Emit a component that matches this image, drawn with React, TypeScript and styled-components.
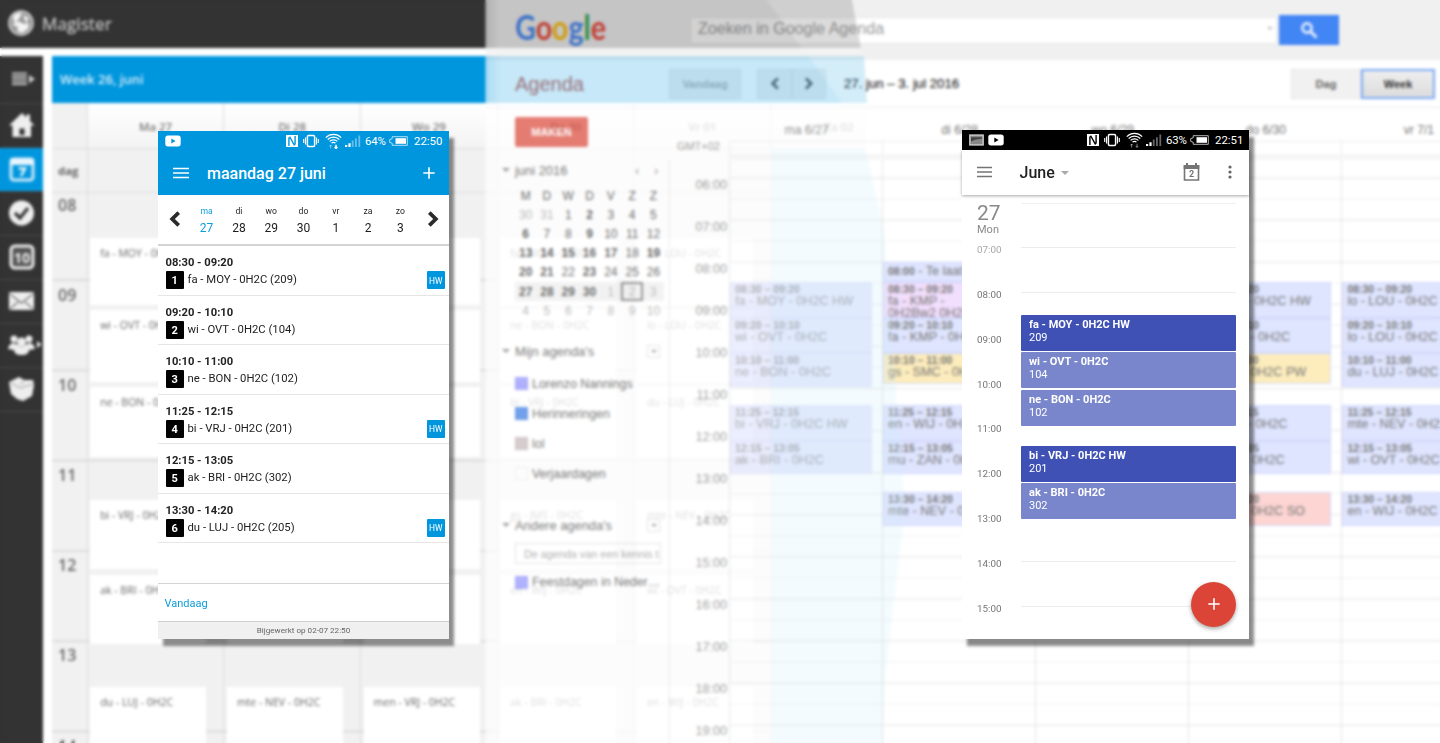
import React from "react";
import styled, { createGlobalStyle, css } from "styled-components";

const GlobalStyle = createGlobalStyle`
  * { box-sizing: border-box; }
  body { margin: 0; background: #fff; overflow: hidden; }
`;

const Stage = styled.div`
  position: relative;
  width: 1440px;
  height: 743px;
  overflow: hidden;
  background: #fff;
  font-family: Roboto, sans-serif;
`;

const Frost = styled.div`
  position: absolute;
  inset: 0;
  backdrop-filter: blur(1.8px);
`;

/* ---------- Google Agenda (desktop) ---------- */

const Google = styled.div`
  position: absolute;
  inset: 0;
  padding-left: 485px;
  display: flex;
  flex-direction: column;
  font-family: "Liberation Sans", Arial, sans-serif;
  color: #444;
`;

const GTop = styled.header`
  height: 60px;
  flex: none;
  display: flex;
  align-items: center;
  background: #f0f0f0;
  padding-left: 30px;
`;

const GLogo = styled.svg`
  width: 94px;
  height: 44px;
  margin-right: 81px;
  font: 700 33.5px Lato, sans-serif;
`;

const GSearch = styled.div`
  width: 587px;
  height: 27px;
  border: 1px solid #e6e6e6;
  background: #fff;
  display: flex;
  align-items: center;
  justify-content: space-between;
  padding: 0 3px 3px 7px;
  font-size: 16.1px;
  color: #999;
  margin-right: 2px;
`;

const GSearchButton = styled.div`
  width: 60px;
  height: 30px;
  display: grid;
  place-items: center;
  background: #4285f4;
`;

const Caret = styled.i<{ $c?: string; $s?: number }>`
  border: ${(p) => p.$s || 4}px solid transparent;
  border-top-color: ${(p) => p.$c || "#888"};
  border-bottom: 0;
`;

const GBar = styled.div`
  height: 48px;
  flex: none;
  display: flex;
  align-items: center;
  padding-left: 30px;
  border-bottom: 1px solid #ebebeb;
`;

const GName = styled.div`
  width: 154px;
  padding-top: 2px;
  font-size: 20px;
  color: #c9675c;
`;

const GButton = styled.div<{ $w: number; $on?: boolean; $mr?: number; $off?: boolean }>`
  width: ${(p) => p.$w}px;
  height: 30px;
  margin-right: ${(p) => p.$mr || 0}px;
  display: grid;
  place-items: center;
  font-size: 11px;
  font-weight: 700;
  color: ${(p) => (p.$on ? "#333" : p.$off ? "#b5b5b5" : "#666")};
  background: ${(p) => (p.$on ? "linear-gradient(#eee, #dcdcdc)" : "#f1f1f1")};
  border: ${(p) => (p.$on ? "2px solid #7aa9f5" : "1px solid #e6e6e6")};
`;

const GRange = styled.div`
  flex: 1;
  font-size: 13.2px;
  color: #222;
  -webkit-text-stroke: 0.15px #222;
`;

const GBody = styled.div`
  flex: 1;
  display: flex;
  min-height: 0;
`;

const GSide = styled.aside`
  width: 184px;
  flex: none;
  padding: 9px 7px 0 30px;
  display: flex;
  flex-direction: column;
`;

const GCreate = styled.div`
  width: 73px;
  height: 30px;
  display: grid;
  place-items: center;
  border-radius: 2px;
  background: #df5a4c;
  color: #fff;
  font-weight: 700;
  font-size: 11px;
`;

const GHeading = styled.div<{ $mt: number; $wide?: boolean }>`
  height: 20px;
  margin: ${(p) => p.$mt}px ${(p) => (p.$wide ? -6 : 2)}px 0 -13px;
  display: flex;
  align-items: center;
  gap: 5px;
  font-size: 12.9px;
  color: #555;
  span { flex: 1; }
`;

const Small = styled.i`
  font-style: normal;
  width: 14px;
  color: #888;
  font-size: 13px;
`;

const MiniMenu = styled.div`
  width: 13px;
  height: 13px;
  display: grid;
  place-items: center;
  border: 1px solid #ddd;
`;

const MiniCal = styled.div`
  margin-top: 6px;
  width: 149px;
  display: grid;
  grid-template-columns: repeat(7, 21.3px);
  grid-auto-rows: 19.2px;
`;

const MiniDay = styled.div<{ $dim?: boolean; $bold?: boolean; $hl?: boolean; $box?: boolean }>`
  display: grid;
  place-items: center;
  font-size: 12px;
  color: ${(p) => (p.$dim ? "#aaa" : "#444")};
  font-weight: ${(p) => (p.$bold ? 700 : 400)};
  background: ${(p) => (p.$hl ? "#efefef" : "none")};
  ${(p) => p.$box && css`border: 2px solid #777;`}
`;

const GCal = styled.div`
  height: 30px;
  display: flex;
  align-items: center;
  gap: 4px;
  font-size: 12.4px;
  white-space: nowrap;
  color: #555;
`;

const GCals = styled.div<{ $mt: number }>`
  margin-top: ${(p) => p.$mt}px;
`;

const Swatch = styled.i<{ $c: string }>`
  width: 13px;
  height: 13px;
  flex: none;
  background: ${(p) => p.$c};
  border: 1px solid #0001;
`;

const GInput = styled.div`
  height: 21px;
  width: 146px;
  margin: 8px 0 3px;
  padding: 4px 0 0 8px;
  border: 1px solid #ddd;
  font-size: 10.8px;
  color: #999;
  white-space: nowrap;
  overflow: hidden;
`;

const GGutter = styled.div`
  width: 60px;
  flex: none;
  padding: 32px 2px 0 0;
  display: flex;
  flex-direction: column;
  text-align: right;
  font-size: 12.6px;
  color: #888;
  background: linear-gradient(#e4e4e4, #e4e4e4) 0 52px / 1px 600px no-repeat;
`;

const GZone = styled.div`
  height: 12px;
  margin-bottom: 24.5px;
  padding-right: 7px;
  font-size: 11px;
  line-height: 12px;
`;

const GHour = styled.div`
  height: 42.05px;
  flex: none;
  line-height: 16px;
`;

const GWeek = styled.div`
  flex: 1;
  display: grid;
  grid-template-columns: repeat(5, 153.1px);
  min-width: 0;
  overflow: hidden;
`;

const GDay = styled.div`
  display: flex;
  flex-direction: column;
`;

const GDayName = styled.div`
  height: 33px;
  padding: 15px 0 0 2px;
  text-align: center;
  font-size: 12.2px;
  line-height: 14px;
  color: #777;
`;

const GAllDay = styled.div`
  height: 19px;
  border: solid #ebebeb;
  border-width: 1px 0 0 1px;
  border-bottom: 6px solid #f6f6f6;
`;

const GHours = styled.div`
  flex: 1;
  border-left: 1px solid #e2e2e2;
  background:
    linear-gradient(#e2e2e2, #e2e2e2 1px, transparent 1px) 0 17.5px / 100% 42.1px,
    linear-gradient(#f1f1f1, #f1f1f1 1px, transparent 1px) 0 38.5px / 100% 42.1px;
`;

const GEvent = styled.div<{ $gap: number; $h: number; $bg?: string; $soft?: boolean }>`
  width: 142px;
  height: ${(p) => p.$h}px;
  margin-top: ${(p) => p.$gap}px;
  padding: 2px 4px 0;
  overflow: hidden;
  font-size: 12.6px;
  line-height: 12px;
  white-space: pre-line;
  color: ${(p) => (p.$soft ? "#a0a0a8" : "#777")};
  background: ${(p) => p.$bg || (p.$soft ? "#e5eafe" : "#dfe5ff")};
  border: 1px solid ${(p) => (p.$soft ? "#dde0fb" : "#d2d6fb")};
`;

const GTime = styled.b<{ $inline?: boolean }>`
  display: ${(p) => (p.$inline ? "inline" : "block")};
  font-size: 10.4px;
  line-height: 10px;
`;

/* ---------- Magister (desktop) ---------- */

const Magister = styled.div`
  position: absolute;
  inset: 0;
  background: #fff;
  font-family: "Open Sans", sans-serif;
  display: flex;
  flex-direction: column;
  clip-path: polygon(0 0, 852px 0, 861px 48px, 864px 56px, 867px 104px, 866px 150px, 884px 230px, 905px 510px, 885px 680px, 883px 743px, 0 743px);
  mask-image: linear-gradient(to right, #000 485px, rgba(0, 0, 0, 0.33) 486px, rgba(0, 0, 0, 0.225) 500px);
`;

const Sheen = styled.div`
  position: absolute;
  inset: 0 auto auto 760px;
  width: 120px;
  height: 103px;
  background: rgba(255, 255, 255, 0.22);
  clip-path: polygon(7px 0, 120px 0, 120px 103px, 82px 103px);
`;

const MTop = styled.header`
  height: 48px;
  flex: none;
  display: flex;
  align-items: center;
  gap: 8px;
  padding: 0 0 2px 8px;
  background: #333;
  color: #c4c4c4;
  font-size: 17.2px;
  -webkit-text-stroke: 0.3px #c4c4c4;
`;

const MBody = styled.div`
  flex: 1;
  min-height: 0;
  display: flex;
  gap: 9px;
  margin-top: 8px;
`;

const MNav = styled.nav`
  width: 43px;
  flex: none;
  background: #333;
`;

const MNavItem = styled.div<{ $on?: boolean; $first?: boolean }>`
  height: ${(p) => (p.$first ? 47.5 : 44.05)}px;
  display: grid;
  place-items: center;
  border-bottom: 1px solid #484848;
  background: ${(p) => (p.$on ? "#0096de" : "none")};
  color: #eee;
  svg { width: 30px; height: 30px; overflow: visible; }
`;

const MMain = styled.main`
  flex: 1;
  min-width: 0;
  display: flex;
  flex-direction: column;
`;

const MBar = styled.div`
  height: 47px;
  flex: none;
  padding: 14px 8px;
  background: #0096de;
  color: #d9effa;
  font-size: 13px;
  font-weight: 600;
  line-height: 18px;
`;

const MTable = styled.div`
  flex: 1;
  min-height: 0;
  display: grid;
  grid-template-columns: 35.7px repeat(6, 136.7px);
  overflow: hidden;
`;

const mHourLines = css`
  background: linear-gradient(#dcdcdc, #dcdcdc 1.5px, transparent 1.5px) 0 86px / 100% 90.3px, #f1f1f1;
`;

const MTimes = styled.div`
  padding-top: 45px;
  border-right: 1.5px solid #dcdcdc;
  background: #f1f1f1;
  color: #666;
  font-weight: 600;
  display: flex;
  flex-direction: column;
`;

const MDayPart = styled.div`
  height: 45px;
  flex: none;
  border: solid #dcdcdc;
  border-width: 1.5px 0;
  font-size: 11.4px;
  padding: 14px 6px;
  line-height: 15px;
  font-weight: 700;
`;

const MTimeList = styled.div`
  flex: 1;
  ${mHourLines}
  font-size: 16px;
`;

const MHour = styled.div`
  height: 90.1px;
  padding: 1px 6px;
`;

const MDay = styled.div<{ $tint?: boolean }>`
  display: flex;
  flex-direction: column;
  border-right: 1.5px solid #dcdcdc;
  ${(p) => p.$tint && css`
    background: #ccecfb;
    && > * + * { background: none; border-bottom-color: transparent; }
  `}
`;

const MDayName = styled.div`
  height: 45px;
  flex: none;
  padding-top: 16px;
  text-align: center;
  font-size: 11.4px;
  line-height: 15px;
  font-weight: 600;
  color: #777;
  background: linear-gradient(#fff, #f3f3f3);
`;

const MAllDay = styled.div`
  height: 45px;
  flex: none;
  border: solid #dcdcdc;
  border-width: 1.5px 0;
  background: #f1f1f1;
`;

const MHours = styled.div<{ $plain?: boolean }>`
  flex: 1;
  padding-left: 2.5px;
  ${(p) => !p.$plain && mHourLines}
`;

const MEvent = styled.div<{ $gap: number; $h: number }>`
  width: 116px;
  height: ${(p) => p.$h}px;
  margin-top: ${(p) => p.$gap}px;
  padding: 6.5px 10px;
  background: #fff;
  font-size: 10.5px;
  line-height: 16px;
  color: #666;
  white-space: nowrap;
`;

/* ---------- Phones ---------- */

const Phone = styled.section<{ $x: number; $y: number; $w: number }>`
  position: absolute;
  left: ${(p) => p.$x}px;
  top: ${(p) => p.$y}px;
  width: ${(p) => p.$w}px;
  height: ${(p) => 639 - p.$y}px;
  display: flex;
  flex-direction: column;
  background: #fff;
  box-shadow: 5px 7px 3px rgba(0, 0, 0, 0.45);
`;

const Status = styled.div<{ $bg: string; $pr: number }>`
  height: 20px;
  flex: none;
  display: flex;
  align-items: center;
  padding: 0 ${(p) => p.$pr}px 0 7px;
  background: ${(p) => p.$bg};
  color: #fff;
  font-size: 11.4px;
  svg { flex: none; }
`;

const StatusLeft = styled.div`
  flex: 1;
  display: flex;
  gap: 4px;
`;

const StatusIcon = styled.svg<{ $ml: number }>`
  margin-left: ${(p) => p.$ml}px;
`;

const Percent = styled.span`
  width: 24px;
  margin-left: 4px;
  letter-spacing: -0.1px;
`;

const Clock = styled.span`
  width: 28px;
  margin-left: 6px;
`;

const BlueBar = styled.div`
  height: 44px;
  flex: none;
  display: flex;
  align-items: center;
  padding: 0 14px 0 15px;
  background: #0096de;
  color: #fff;
`;

const BlueTitle = styled.h1`
  flex: 1;
  margin: 0 0 0 18px;
  font-size: 16px;
  font-weight: 500;
`;

const Strip = styled.div`
  height: 51px;
  flex: none;
  display: grid;
  grid-template-columns: 32px repeat(7, 32.3px) 32px;
  justify-content: center;
  align-items: center;
  border-bottom: 2px solid #d4d4d4;
  svg { justify-self: center; margin: -1px 0 0 1px; }
`;

const StripDay = styled.div<{ $on?: boolean }>`
  display: flex;
  flex-direction: column;
  align-items: center;
  padding-top: 2px;
  font-size: 12px;
  line-height: 17px;
  color: ${(p) => (p.$on ? "#0d9ddb" : "#1c1c1c")};
  small { font-size: 8.6px; margin-top: -1px; }
`;

const Lesson = styled.article`
  height: 49.55px;
  flex: none;
  padding: 9px 4px 0 7.5px;
  border-bottom: 1px solid #e6e6e6;
  color: #222;
`;

const LessonTime = styled.div`
  font-size: 11.2px;
  font-weight: 700;
  line-height: 15px;
`;

const LessonLine = styled.div`
  height: 18px;
  margin-top: 1px;
  display: flex;
  align-items: center;
  font-size: 11.3px;
  span { flex: 1; margin: -1px 0 0 3.5px; }
`;

const Badge = styled.b<{ $hw?: boolean }>`
  width: 18.5px;
  height: 18px;
  display: grid;
  place-items: center;
  border-radius: 1px;
  padding-top: 1px;
  background: ${(p) => (p.$hw ? "#0096de" : "#000")};
  color: #fff;
  font-size: ${(p) => (p.$hw ? 8.4 : 11)}px;
  font-weight: ${(p) => (p.$hw ? 400 : 700)};
`;

const Today = styled.div`
  margin-top: auto;
  height: 38px;
  padding: 12px 6.5px;
  border-top: 1px solid #d4d4d4;
  color: #0d9ddb;
  font-size: 11px;
  line-height: 15px;
`;

const Updated = styled.div`
  height: 18px;
  border-top: 1px solid #d0d0d0;
  background: #f0f0f0;
  color: #666;
  font-size: 8.1px;
  line-height: 17px;
  text-align: center;
`;

const WhiteBar = styled.div`
  height: 45px;
  flex: none;
  display: flex;
  align-items: center;
  padding: 0 17px 1px 15px;
  background: #fff;
  color: #757575;
  box-shadow: 0 1px 3px rgba(0, 0, 0, 0.35);
  z-index: 1;
`;

const Month = styled.h1`
  flex: 1;
  margin: 1px 0 0 27.5px;
  display: flex;
  align-items: center;
  gap: 6px;
  font-size: 16px;
  font-weight: 500;
  color: #212121;
`;

const CalendarIcon = styled.svg`
  margin-right: 28px;
`;

const Agenda = styled.div`
  position: relative;
  flex: 1;
  min-height: 0;
  padding-left: 15px;
`;

const DateBlock = styled.div`
  height: 45px;
  padding-top: 7px;
  color: #8a8a8a;
  font-size: 21px;
  line-height: 22px;
  small { display: block; font-size: 11px; line-height: 12px; }
`;

const Hour = styled.div<{ $dim?: boolean }>`
  height: 44.85px;
  display: flex;
  gap: 19px;
  padding-right: 13px;
  font-size: 9.8px;
  line-height: 19px;
  color: ${(p) => (p.$dim ? "#a8a8a8" : "#757575")};
  span { width: 25px; }
`;

const Rule = styled.i`
  flex: 1;
  height: 1px;
  margin-top: 7px;
  background: #ececec;
`;

const TopRule = styled.i`
  display: block;
  height: 1px;
  margin: 8px 13px -9px 44px;
  background: #f1f1f1;
`;

const Blocks = styled.div`
  position: absolute;
  top: 120px;
  left: 59px;
  width: 215px;
`;

const Block = styled.div<{ $hw?: boolean; $gap?: number }>`
  height: 35.8px;
  margin-bottom: ${(p) => p.$gap || 1.6}px;
  padding: 3px 8px;
  border-radius: 1px;
  background: ${(p) => (p.$hw ? "#3f51b5" : "#7986cb")};
  color: #fff;
  font-size: 11px;
  line-height: 13px;
  b { display: block; }
`;

const Fab = styled.div`
  position: absolute;
  right: 13px;
  bottom: 12.5px;
  width: 45px;
  height: 45px;
  display: grid;
  place-items: center;
  border-radius: 50%;
  background: #db4437;
  box-shadow: 0 2px 4px rgba(0, 0, 0, 0.35);
`;

/* ---------- Icons ---------- */

const Burger = ({ w = 15 }: { w?: number }) => (
  <svg width={w} height="12" fill="none" stroke="currentColor" strokeWidth="1.5">
    <path d={`M0 1.5H${w}M0 6H${w}M0 10.5H${w}`} />
  </svg>
);

const Plus = ({ s = 12 }: { s?: number }) => (
  <svg width={s} height={s} viewBox="0 0 12 12" stroke="#fff" strokeWidth="1.6">
    <path d="M6 .3V11.7M.3 6H11.7" />
  </svg>
);

const Chevron = ({ right, size = 16, w = 3.8, color = "#2a2a2a" }: { right?: boolean; size?: number; w?: number; color?: string }) => (
  <svg width={size * 0.75} height={size} viewBox="0 0 12 16" fill="none" stroke={color} strokeWidth={w}>
    <path d={right ? "M2.3 1.7 8.8 8l-6.5 6.3" : "M9.7 1.7 3.2 8l6.5 6.3"} />
  </svg>
);

const Tube = ({ hole }: { hole: string }) => (
  <svg width="16" height="12" viewBox="0 0 16 12">
    <rect x=".3" y=".6" width="15.4" height="10.8" rx="2.6" fill="#fff" />
    <path d="M6.3 3.4v5L10.6 6z" fill={hole} />
  </svg>
);

const StatusBar = ({ bg, level, time, picture, syncing }: { bg: string; level: string; time: string; picture?: boolean; syncing?: boolean }) => (
  <Status $bg={bg} $pr={picture ? 6 : 7}>
    <StatusLeft>
      {picture && (
        <svg width="15" height="12" viewBox="0 0 15 12">
          <rect x=".8" y="1" width="13.4" height="10" fill="#888" stroke="#ddd" strokeWidth="1.2" />
          <path d="M2 3.2h11v1.600L7 5.600 2 7.500z" fill="#444" />
        </svg>
      )}
      <Tube hole={bg} />
    </StatusLeft>
    <StatusIcon $ml={0} width="12" height="12" viewBox="0 0 12 12">
      <rect width="12" height="12" fill="#fff" />
      <path d="M2.900 11V3l1-.8 4.300 7.600.9-.8V1" fill="none" stroke={bg} strokeWidth="1.400" />
    </StatusIcon>
    <StatusIcon $ml={5} width="16" height="14" viewBox="0 0 16 14" fill="none" stroke="#fff">
      <rect x="4.400" y="1.600" width="7.200" height="10.800" rx="1.200" strokeWidth="1.500" />
      <path d="M2.500 3.400v7.200M13.500 3.400v7.200M.7 5v4M15.300 5v4" strokeWidth="1.100" />
    </StatusIcon>
    <StatusIcon $ml={6} width="17" height="16" viewBox="0 0 17 16" fill="none" stroke="#fff">
      <path d="M.8 4.600a10.900 10.900 0 0 1 15.400 0M2.700 6.500a8.200 8.200 0 0 1 11.600 0M4.600 8.400a5.500 5.500 0 0 1 7.800 0M6.500 10.200a2.800 2.800 0 0 1 4 0" strokeWidth="1.200" />
      <path d="M5.600 15.500v-3.400M4.400 13.300l1.200-1.300 1.200 1.300" strokeWidth=".8" opacity=".6" />
      <path d="M11 11.700v3.600M9.600 13.900l1.400 1.500 1.400-1.500" strokeWidth={syncing ? 1.5 : 0.8} opacity={syncing ? 1 : 0.6} />
    </StatusIcon>
    <StatusIcon $ml={3} width="16" height="12" viewBox="0 0 16 12" fill="#fff">
      <path d="M0 10h2.200v2H0zM3.400 8.200h2.200V12H3.400z" />
      <path d="M6.800 5.600h1.800V12H6.800zM10 3.200h1.800V12H10zM13.400.6h1.800V12h-1.800z" opacity=".4" />
    </StatusIcon>
    <Percent>{level}</Percent>
    <svg width="19" height="10" viewBox="0 0 19 10">
      <path d="M3.200.7H18.300v8.600H3.200V7.200L.7 6.400V3.600l2.500-.8z" fill="none" stroke="#fff" strokeOpacity=".7" />
      <path d="M6.500 2.200H17v5.600H6.500z" fill="#fff" />
    </svg>
    <Clock>{time}</Clock>
  </Status>
);

const NavIcons = [
  <svg viewBox="0 0 30 30" key="l"><path d="M5 9.500h15M5 13h15M5 16.500h15M5 20h15" stroke="#ccc" strokeWidth="1.800" /><path d="M22 11 28 15l-6 4.500z" fill="#ccc" /></svg>,
  <svg viewBox="0 0 30 30" key="h" fill="#eee"><path d="M15 3 2 15.500h3.500V27H24V15.500h3.500L23 11V4.500h-3.500v3zM12.500 18.500h5V25h-5z" fillRule="evenodd" /></svg>,
  <svg viewBox="0 0 30 30" key="c"><rect x="4" y="5" width="22" height="21" rx="3" fill="none" stroke="#cdeaf9" strokeWidth="3" /><path d="M3 4.500h24V11H3z" fill="#e8f6fd" /><path d="M11.500 14.500h6.500L14 22" stroke="#e8f6fd" strokeWidth="2.500" fill="none" /></svg>,
  <svg viewBox="0 0 30 30" key="k"><circle cx="14.500" cy="15" r="12.500" fill="#eee" /><path d="m8 15 5 5 8-10" stroke="#333" strokeWidth="3.200" fill="none" /></svg>,
  <svg viewBox="0 0 30 30" key="t"><rect x="4" y="4" width="22" height="22" rx="4" fill="#555" stroke="#eee" strokeWidth="3" /><text x="15" y="20.500" fontSize="14" fontWeight="700" fill="#eee" textAnchor="middle">10</text></svg>,
  <svg viewBox="0 0 30 30" key="m"><rect x="2" y="6" width="25" height="18" rx="1.500" fill="#eee" /><path d="m3 8 11.500 9L26 8M3 23l8-7M26 23l-8-7" stroke="#777" strokeWidth="1.400" fill="none" /></svg>,
  <svg viewBox="0 0 30 30" key="p" fill="#eee"><circle cx="7" cy="9" r="3.500" /><circle cx="22" cy="9" r="3.500" /><circle cx="14.500" cy="12" r="4.500" /><path d="M1 19q1-6 6-6l7.500 4 7.500-4q5 0 6 6l-6 1q0 5-7.500 5T7 20zM30 11l4.500 3.500L30 18z" /></svg>,
  <svg viewBox="0 0 30 30" key="b" fill="#eee"><path d="M2 8 12 3l5 3 9 0 1 5-2 11-9 5-6-2-6-5z" /><path d="m4 9 9 5 13-4M13 10l4-2" stroke="#999" fill="none" /></svg>,
];

/* ---------- Data ---------- */

const magisterDays = [
  { name: "Ma 27", items: ["fa - MOY - 0H2C", "wi - OVT - 0H2C", "ne - BON - 0H2C", "bi - VRJ - 0H2C", "ak - BRI - 0H2C", "du - LUJ - 0H2C"] },
  { name: "Di 28", items: ["", "", "", "", "", "mte - NEV - 0H2C"] },
  { name: "Wo 29", items: ["", "", "", "", "wi - OVT - 0H2C", "men - VRJ - 0H2C"] },
  { name: "Do 30", items: ["fa - MOY - 0H2C", "ne - BON - 0H2C", "bi - VRJ - 0H2C", "gs - JMS - 0H2C", "en - WIJ - 0H2C", "ak - BRI - 0H2C"] },
  { name: "Vr 01", items: ["lo - LOU - 0H2C", "lo - LOU - 0H2C", "du - LUJ - 0H2C", "mte - NEV - 0H2C", "wi - OVT - 0H2C", "en - WIJ - 0H2C"] },
];
const slots = [[45, 67], [5, 72], [5, 70], [43, 69], [6, 69], [43, 75]];

type GItem = [number, number, string, string, string?];
const googleDays: { name: string; soft?: boolean; items: GItem[] }[] = [
  { name: "ma 6/27", soft: true, items: [[122, 36, "08:30 – 09:20", "fa - MOY - 0H2C HW"], [0, 35, "09:20 – 10:10", "wi - OVT - 0H2C"], [0, 34, "10:10 – 11:00", "ne - BON - 0H2C"], [18, 36, "11:25 – 12:15", "bi - VRJ - 0H2C HW"], [0, 33, "12:15 – 13:05", "ak - BRI - 0H2C"]] },
  { name: "di 6/28", items: [[102, 20, "08:00", " - Te laat"], [0, 36, "08:30 – 09:20", "fa - KMP -\n0H2Bw2 0H2B", "#f2defd"], [0, 35, "09:20 – 10:10", "fa - KMP - 0H2C"], [0, 31, "10:10 – 11:00", "gs - SMC - 0H2C", "#fdedbd"], [21, 36, "11:25 – 12:15", "en - WIJ - 0H2C"], [0, 33, "12:15 – 13:05", "mu - ZAN - 0H2C"], [18, 34, "13:30 – 14:20", "mte - NEV - 0H2C"]] },
  { name: "wo 6/29", items: [] },
  { name: "do 6/30", items: [[122, 36, "08:30 – 09:20", "wi - OVT - 0H2C HW"], [0, 35, "09:20 – 10:10", "ne - BON - 0H2C"], [0, 31, "10:10 – 11:00", "bi - VRJ - 0H2C PW", "#fdedbd"], [21, 36, "11:25 – 12:15", "gs - JMS - 0H2C"], [0, 33, "12:15 – 13:05", "en - WIJ - 0H2C"], [18, 34, "13:30 – 14:20", "ak - BRI - 0H2C SO", "#fdd5d3"]] },
  { name: "vr 7/1", items: [[122, 36, "08:30 – 09:20", "lo - LOU - 0H2C HW"], [0, 35, "09:20 – 10:10", "lo - LOU - 0H2C"], [0, 34, "10:10 – 11:00", "du - LUJ - 0H2C"], [18, 36, "11:25 – 12:15", "mte - NEV - 0H2C"], [0, 33, "12:15 – 13:05", "wi - OVT - 0H2C"], [18, 34, "13:30 – 14:20", "en - WIJ - 0H2C"]] },
];

const miniDays = [30, 31, ...Array.from({ length: 30 }, (_, i) => i + 1), 1, 2, 3, 4, 5, 6, 7, 8, 9, 10];
const boldDays = new Set([2, 6, 9, 13, 14, 15, 16, 17, 19, 20, 21, 23, 27, 28, 29, 30]);

const lessons: [string, string, boolean][] = [
  ["08:30 - 09:20", "fa - MOY - 0H2C (209)", true],
  ["09:20 - 10:10", "wi - OVT - 0H2C (104)", false],
  ["10:10 - 11:00", "ne - BON - 0H2C (102)", false],
  ["11:25 - 12:15", "bi - VRJ - 0H2C (201)", true],
  ["12:15 - 13:05", "ak - BRI - 0H2C (302)", false],
  ["13:30 - 14:20", "du - LUJ - 0H2C (205)", true],
];

const stripDays = [["ma", 27], ["di", 28], ["wo", 29], ["do", 30], ["vr", 1], ["za", 2], ["zo", 3]];

/* ---------- Views ---------- */

const GoogleDesktop = () => (
  <Google>
    <GTop>
      <GLogo>
        <text x="0" y="32.3" textLength="91" lengthAdjust="spacingAndGlyphs">
          <tspan fill="#4285f4">G</tspan><tspan fill="#ea4335">o</tspan><tspan fill="#fbbc05">o</tspan><tspan fill="#4285f4">g</tspan><tspan fill="#34a853">l</tspan><tspan fill="#ea4335">e</tspan>
        </text>
      </GLogo>
      <GSearch>Zoeken in Google Agenda<Caret $c="#bbb" $s={3} /></GSearch>
      <GSearchButton>
        <svg width="18" height="18" viewBox="0 0 18 18" fill="none" stroke="#e8f0fe">
          <circle cx="7" cy="7" r="4.600" strokeWidth="2.600" /><path d="m10.500 10.500 6 6" strokeWidth="3" />
        </svg>
      </GSearchButton>
    </GTop>
    <GBar>
      <GName>Agenda</GName>
      <GButton $w={72} $mr={16} $off>Vandaag</GButton>
      <GButton $w={35}><Chevron size={13} w={3.2} color="#555" /></GButton>
      <GButton $w={34} $mr={18}><Chevron right size={13} w={3.2} color="#555" /></GButton>
      <GRange>27. jun – 3. jul 2016</GRange>
      <GButton $w={70}>Dag</GButton>
      <GButton $w={74} $on $mr={5}>Week</GButton>
    </GBar>
    <GBody>
      <GSide>
        <GCreate>MAKEN</GCreate>
        <GHeading $mt={13} $wide><Caret /><span>juni 2016</span><Small>‹</Small><Small>›</Small></GHeading>
        <MiniCal>
          {["M", "D", "W", "D", "V", "Z", "Z"].map((d, i) => <MiniDay key={i}>{d}</MiniDay>)}
          {miniDays.map((d, i) => (
            <MiniDay key={i + 7} $dim={i < 2 || i > 31} $bold={i > 1 && i < 32 && boldDays.has(d)} $hl={i > 27 && i < 35} $box={i === 33}>{d}</MiniDay>
          ))}
        </MiniCal>
        <GHeading $mt={21}><Caret /><span>Mijn agenda's</span><MiniMenu><Caret $s={3} /></MiniMenu></GHeading>
        <GCals $mt={7.5}>
          <GCal><Swatch $c="#9a9cff" />Lorenzo Nannings</GCal>
          <GCal><Swatch $c="#4986e7" />Herinneringen</GCal>
          <GCal><Swatch $c="#cabdbf" />lol</GCal>
          <GCal><Swatch $c="#fff" />Verjaardagen</GCal>
        </GCals>
        <GHeading $mt={26.5}><Caret /><span>Andere agenda's</span><MiniMenu><Caret $s={3} /></MiniMenu></GHeading>
        <GInput>De agenda van een kennis t</GInput>
        <GCal><Swatch $c="#9a9cff" />Feestdagen in Neder…</GCal>
      </GSide>
      <GGutter>
        <GZone>GMT+02</GZone>
        {Array.from({ length: 14 }, (_, i) => <GHour key={i}>{String(i + 6).padStart(2, "0")}:00</GHour>)}
      </GGutter>
      <GWeek>
        {googleDays.map((d) => (
          <GDay key={d.name}>
            <GDayName>{d.name}</GDayName>
            <GAllDay />
            <GHours>
              {d.items.map(([gap, h, time, title, bg], i) => (
                <GEvent key={i} $gap={gap} $h={h} $bg={bg} $soft={d.soft}><GTime $inline={h < 25}>{time}</GTime>{title}</GEvent>
              ))}
            </GHours>
          </GDay>
        ))}
      </GWeek>
    </GBody>
  </Google>
);

const MagisterDesktop = () => (
  <Magister>
    <MTop>
      <svg width="26" height="26" viewBox="0 0 26 26">
        <circle cx="13" cy="13" r="12" fill="#999" stroke="#ddd" strokeWidth="1.500" />
        <path d="M5 6q4-4 9-3l-3 6-5 4zM15 5l6 3-3 5zM4 15l6-4 6 3 5-1-1 6-6 4-5-2 1-4z" fill="#f4f4f4" />
      </svg>
      Magister
    </MTop>
    <MBody>
      <MNav>
        {NavIcons.map((icon, i) => <MNavItem key={i} $first={i === 0} $on={i === 2}>{icon}</MNavItem>)}
      </MNav>
      <MMain>
        <MBar>Week 26, juni</MBar>
        <MTable>
          <MTimes>
            <MDayPart>dag</MDayPart>
            <MTimeList>{["08", "09", "10", "11", "12", "13", "14"].map((h) => <MHour key={h}>{h}</MHour>)}</MTimeList>
          </MTimes>
          {magisterDays.map((d) => (
            <MDay key={d.name}>
              <MDayName>{d.name}</MDayName>
              <MAllDay />
              <MHours>
                {d.items.map((t, i) => <MEvent key={i} $gap={slots[i][0]} $h={slots[i][1]}>{t}</MEvent>)}
              </MHours>
            </MDay>
          ))}
          <MDay $tint>
            <MDayName>Za 02</MDayName>
            <MAllDay />
            <MHours $plain />
          </MDay>
        </MTable>
      </MMain>
    </MBody>
    <Sheen />
  </Magister>
);

const MagisterPhone = () => (
  <Phone $x={158} $y={131} $w={291}>
    <StatusBar bg="#0096de" level="64%" time="22:50" syncing />
    <BlueBar><Burger w={16} /><BlueTitle>maandag 27 juni</BlueTitle><Plus /></BlueBar>
    <Strip>
      <Chevron />
      {stripDays.map(([d, n], i) => <StripDay key={d} $on={i === 0}><small>{d}</small>{n}</StripDay>)}
      <Chevron right />
    </Strip>
    {lessons.map(([time, text, hw], i) => (
      <Lesson key={time}>
        <LessonTime>{time}</LessonTime>
        <LessonLine><Badge>{i + 1}</Badge><span>{text}</span>{hw && <Badge $hw>HW</Badge>}</LessonLine>
      </Lesson>
    ))}
    <Today>Vandaag</Today>
    <Updated>Bijgewerkt op 02-07 22:50</Updated>
  </Phone>
);

const GooglePhone = () => (
  <Phone $x={962} $y={130} $w={287}>
    <StatusBar bg="#000" level="63%" time="22:51" picture />
    <WhiteBar>
      <Burger />
      <Month>June <Caret $c="#aaa" /></Month>
      <CalendarIcon width="17" height="18" viewBox="0 0 17 18">
        <path d="M1.500 3h14v14h-14z" fill="none" stroke="#757575" strokeWidth="1.600" />
        <path d="M.7 2h15.600v4H.7zM3 0h2v3H3zM12 0h2v3h-2z" fill="#757575" />
        <text x="8.500" y="14.200" fontSize="9" fontWeight="700" fill="#757575" textAnchor="middle">2</text>
      </CalendarIcon>
      <svg width="4" height="14" fill="#666"><circle cx="2" cy="2" r="1.600" /><circle cx="2" cy="7" r="1.600" /><circle cx="2" cy="12" r="1.600" /></svg>
    </WhiteBar>
    <Agenda>
      <TopRule />
      <DateBlock>27<small>Mon</small></DateBlock>
      {["07", "08", "09", "10", "11", "12", "13", "14", "15"].map((h, i) => (
        <Hour key={h} $dim={i === 0}><span>{h}:00</span>{h !== "11" && <Rule />}</Hour>
      ))}
      <Blocks>
        <Block $hw><b>fa - MOY - 0H2C HW</b>209</Block>
        <Block><b>wi - OVT - 0H2C</b>104</Block>
        <Block $gap={20.2}><b>ne - BON - 0H2C</b>102</Block>
        <Block $hw><b>bi - VRJ - 0H2C HW</b>201</Block>
        <Block><b>ak - BRI - 0H2C</b>302</Block>
      </Blocks>
      <Fab><Plus s={12} /></Fab>
    </Agenda>
  </Phone>
);

export default function App() {
  return (
    <>
      <GlobalStyle />
      <Stage>
        <GoogleDesktop />
        <MagisterDesktop />
        <Frost />
        <MagisterPhone />
        <GooglePhone />
      </Stage>
    </>
  );
}
